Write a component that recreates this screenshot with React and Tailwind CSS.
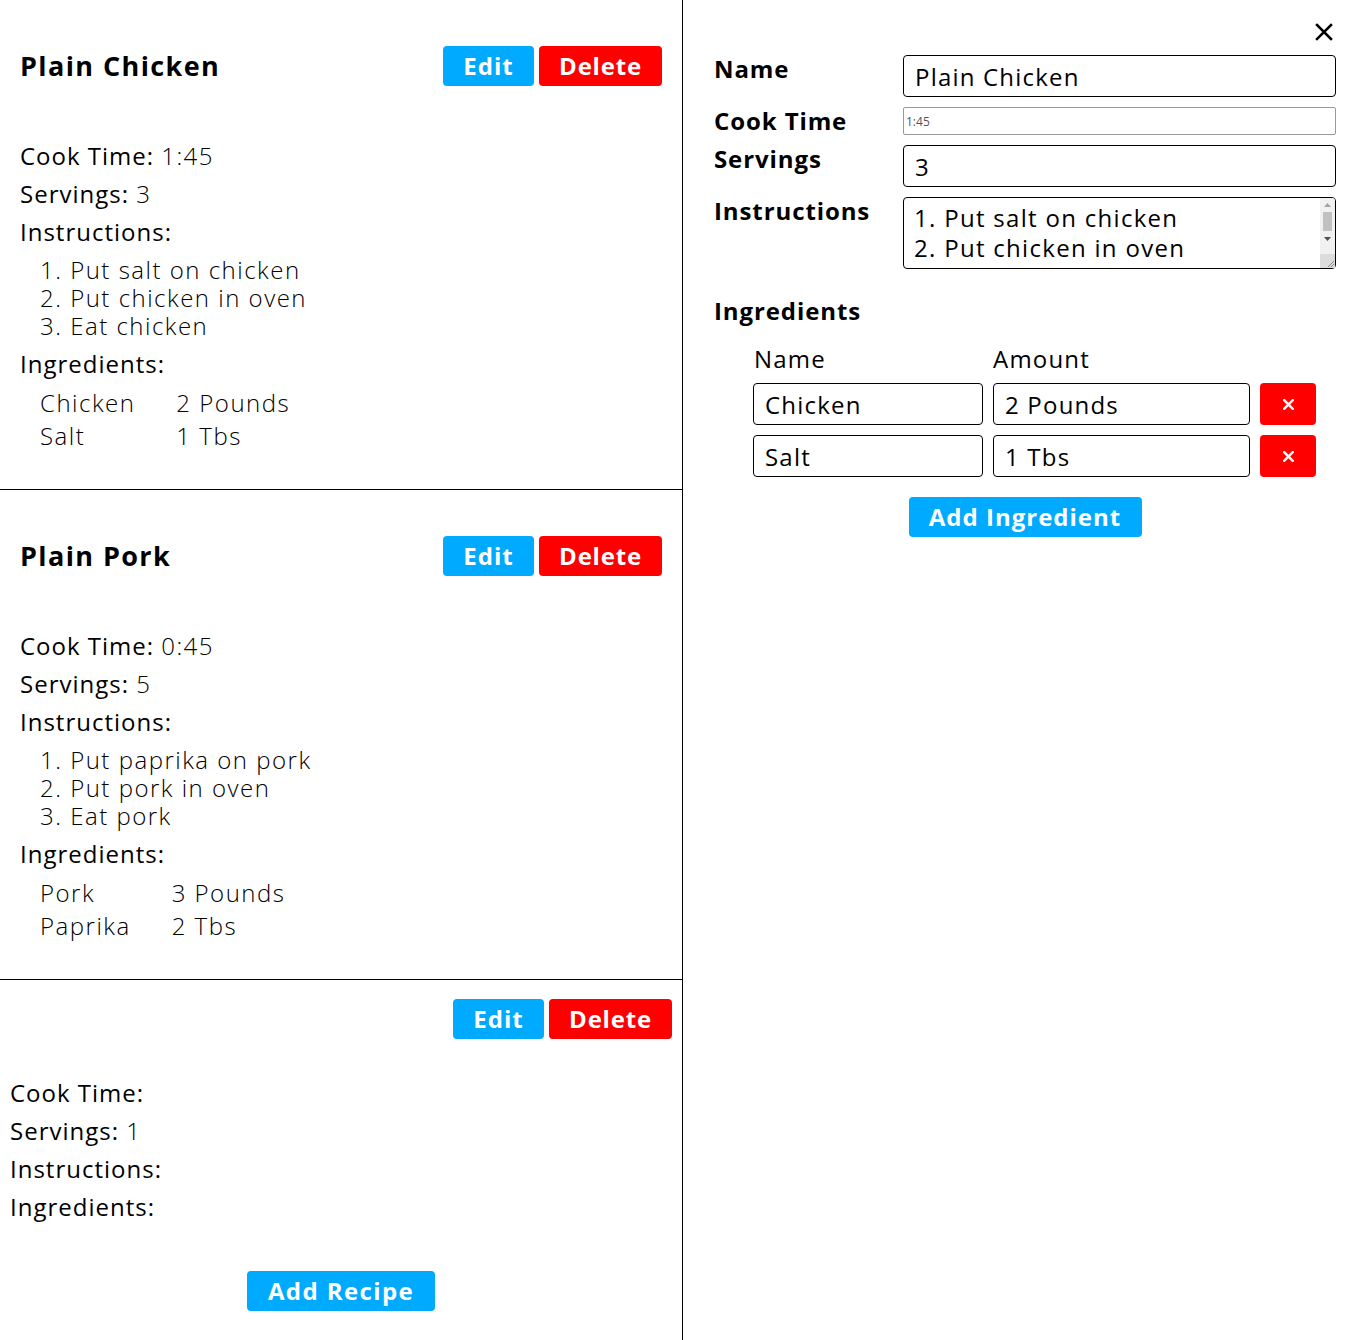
import React from "react";

const FONT = { fontFamily: '"Open Sans", "Noto Sans", sans-serif' };

const recipes = [
  {
    name: "Plain Chicken",
    time: "1:45",
    servings: "3",
    steps: ["Put salt on chicken", "Put chicken in oven", "Eat chicken"],
    ingredients: [
      ["Chicken", "2 Pounds"],
      ["Salt", "1 Tbs"],
    ],
  },
  {
    name: "Plain Pork",
    time: "0:45",
    servings: "5",
    steps: ["Put paprika on pork", "Put pork in oven", "Eat pork"],
    ingredients: [
      ["Pork", "3 Pounds"],
      ["Paprika", "2 Tbs"],
    ],
  },
];

function Buttons() {
  return (
    <div className="flex gap-[5px]">
      <button className="w-[91px] h-10 rounded-[4px] bg-[#00aaff] text-white text-[24px] font-bold leading-none tracking-[1px]">
        Edit
      </button>
      <button className="w-[123px] h-10 rounded-[4px] bg-[#ff0000] text-white text-[24px] font-bold leading-none tracking-[0.8px]">
        Delete
      </button>
    </div>
  );
}

function Details({ r }) {
  return (
    <div className="text-[24px] text-black tracking-[1px]">
      <div className="leading-[38px]">
        Cook Time: <span className="font-light tracking-[1.4px]">{r.time}</span>
      </div>
      <div className="leading-[38px]">
        Servings: <span className="font-light">{r.servings}</span>
      </div>
      <div className="leading-[38px]">Instructions:</div>
      {r.steps.length > 0 && (
        <ol className="my-[5px] pl-5 leading-[28px] font-light tracking-[1.5px]">
          {r.steps.map((s, i) => (
            <li key={i}>
              {i + 1}. {s}
            </li>
          ))}
        </ol>
      )}
      <div className="leading-[38px]">Ingredients:</div>
      {r.ingredients.length > 0 && (
        <table className="mt-[3px] ml-5 font-light tracking-[1.5px]">
          <tbody>
            {r.ingredients.map(([n, a], i) => (
              <tr key={i} className="h-[33px]">
                <td className="pr-[41px] p-0 leading-[33px]">{n}</td>
                <td className="p-0 leading-[33px]">{a}</td>
              </tr>
            ))}
          </tbody>
        </table>
      )}
    </div>
  );
}

function RecipeCard({ r }) {
  return (
    <div className="border-b border-black px-5 pt-[46px] pb-[37px]">
      <div className="flex items-center justify-between h-10">
        <h2 className="text-[27px] font-bold text-black tracking-[1.4px]">{r.name}</h2>
        <Buttons />
      </div>
      <div className="mt-[51px]">
        <Details r={r} />
      </div>
    </div>
  );
}

function Input({ value, className = "" }) {
  return (
    <input
      readOnly
      value={value}
      className={
        "border border-black rounded-[4px] h-[42px] px-[11px] text-[24px] text-black outline-none tracking-[1.2px] " +
        className
      }
      style={FONT}
    />
  );
}

function XIcon({ size = 18, stroke = 2.5 }) {
  return (
    <svg width={size} height={size} viewBox="0 0 18 18">
      <path
        d="M2 2 L16 16 M16 2 L2 16"
        stroke="currentColor"
        strokeWidth={stroke}
        strokeLinecap="square"
      />
    </svg>
  );
}

function Label({ children }) {
  return (
    <label className="w-[189px] shrink-0 text-[24px] font-bold leading-[28px] tracking-[0.9px]">
      {children}
    </label>
  );
}

function Editor() {
  const rows = [
    ["Chicken", "2 Pounds"],
    ["Salt", "1 Tbs"],
  ];
  return (
    <div className="flex-1 pl-[31px] pr-[30px] pt-[55px] relative">
      <button className="absolute left-[632px] top-[23px] text-black">
        <XIcon />
      </button>
      <div className="flex flex-col gap-[10px]">
        <div className="flex">
          <Label>Name</Label>
          <Input value="Plain Chicken" className="flex-1 min-w-0" />
        </div>
        <div className="flex">
          <Label>Cook Time</Label>
          <input
            readOnly
            value="1:45"
            className="flex-1 min-w-0 h-[28px] border border-[#999] rounded-[2px] px-[2px] text-[12px] text-[#555] outline-none"
            style={FONT}
          />
        </div>
        <div className="flex">
          <Label>Servings</Label>
          <Input value="3" className="flex-1 min-w-0" />
        </div>
        <div className="flex">
          <Label>Instructions</Label>
          <div className="relative flex-1 min-w-0 h-[72px]">
            <textarea
              readOnly
              value={"1. Put salt on chicken\n2. Put chicken in oven\n3. Eat chicken"}
              className="w-full h-[72px] block resize-none border border-black rounded-[4px] pl-[10px] pr-[20px] py-[5px] text-[24px] leading-[30px] tracking-[1.3px] text-black outline-none overflow-hidden"
              style={FONT}
            />
            <div className="absolute right-[1px] top-[1px] bottom-[1px] w-[15px] bg-[#f1f1f1] rounded-r-[3px] flex flex-col items-center">
              <div className="h-[14px] flex items-center justify-center">
                <svg width="7" height="4" viewBox="0 0 7 4">
                  <path d="M0 4 L3.5 0 L7 4 Z" fill="#a3a3a3" />
                </svg>
              </div>
              <div className="w-[9px] h-[19px] bg-[#c1c1c1]" />
              <div className="h-[16px] flex items-center justify-center">
                <svg width="7" height="4" viewBox="0 0 7 4">
                  <path d="M0 0 L7 0 L3.5 4 Z" fill="#505050" />
                </svg>
              </div>
              <div className="flex-1" />
              <div className="w-[15px] h-[14px] bg-[#dcdcdc] flex items-end justify-end">
                <svg width="10" height="10" viewBox="0 0 10 10">
                  <path d="M9 3 L3 9 M9 6 L6 9" stroke="#888" strokeWidth="1" />
                </svg>
              </div>
            </div>
          </div>
        </div>
      </div>
      <h3 className="mt-[28px] text-[24px] font-bold leading-[28px] tracking-[0.9px]">Ingredients</h3>
      <div className="ml-[39px] mt-[20px]">
        <div className="flex text-[24px] leading-[28px] tracking-[1.2px]">
          <div className="w-[240px] pl-[1px]">Name</div>
          <div>Amount</div>
        </div>
        <div className="mt-[10px] flex flex-col gap-[10px]">
          {rows.map(([n, a], i) => (
            <div key={i} className="flex gap-[10px]">
              <Input value={n} className="w-[230px]" />
              <Input value={a} className="w-[257px]" />
              <button className="w-[56px] h-[42px] rounded-[4px] bg-[#ff0000] text-white flex items-center justify-center">
                <XIcon size={11} stroke={4} />
              </button>
            </div>
          ))}
        </div>
      </div>
      <div className="mt-[20px] flex justify-center">
        <button className="w-[233px] h-10 rounded-[4px] bg-[#00aaff] text-white text-[24px] font-bold leading-none tracking-[1px]">
          Add Ingredient
        </button>
      </div>
    </div>
  );
}

export default function App() {
  return (
    <div className="flex min-h-[1340px] bg-white text-black" style={FONT}>
      <div className="w-[683px] shrink-0 border-r border-black">
        {recipes.map((r, i) => (
          <RecipeCard key={i} r={r} />
        ))}
        <div className="px-[10px] pt-[19px]">
          <div className="flex justify-end h-10">
            <Buttons />
          </div>
          <div className="mt-[35px]">
            <Details r={{ time: "", servings: "1", steps: [], ingredients: [] }} />
          </div>
          <div className="mt-[45px] flex justify-center">
            <button className="w-[188px] h-10 rounded-[4px] bg-[#00aaff] text-white text-[24px] font-bold leading-none tracking-[1.4px]">
              Add Recipe
            </button>
          </div>
        </div>
      </div>
      <Editor />
    </div>
  );
}
